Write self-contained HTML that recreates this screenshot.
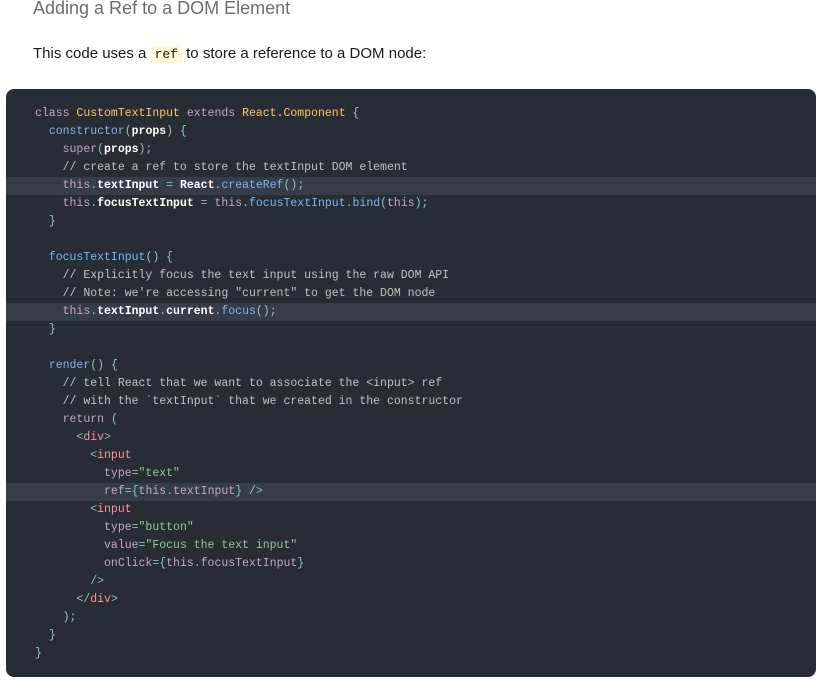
<!DOCTYPE html>
<html><head><meta charset="utf-8"><style>
body{margin:0;background:#fff;width:821px;height:695px;overflow:hidden;font-family:"Liberation Sans",sans-serif}
h2{position:absolute;left:33px;top:-2px;margin:0;font-weight:normal;font-size:18px;color:#6d6d6d}
p{position:absolute;left:33px;top:45px;margin:0;font-size:15px;color:#1a1a1a}
p code{font-family:"Liberation Mono",monospace;font-size:13px;background:#fff8d6;padding:1px 4px}
.code{position:absolute;left:6px;top:89px;width:810px;height:588px;background:#282c34;border-radius:8px;overflow:hidden}
pre{margin:0;position:absolute;top:16px;left:0;right:0;font-family:"Liberation Mono",monospace;font-size:11.5px;line-height:18px;color:#fff}
.l{display:block;padding-left:29px;height:18px;white-space:pre}
.h{background:#373c49}
.k{color:#c5a5c5}.c{color:#fac863}.f{color:#79b6f2}.p{color:#88c6be}.m{color:#c0c0c0}.s{color:#8dc891}.t{color:#fc929e}.b{font-weight:bold;color:#fff}
</style></head><body>
<h2>Adding a Ref to a DOM Element</h2>
<p>This code uses a <code>ref</code> to store a reference to a DOM node:</p>
<div class="code"><pre><span class="l"><span class="k">class</span> <span class="c">CustomTextInput</span> <span class="k">extends</span> <span class="c">React.Component</span> <span class="p">{</span></span><span class="l">  <span class="f">constructor</span><span class="p">(</span><span class="b">props</span><span class="p">)</span> <span class="p">{</span></span><span class="l">    <span class="k">super</span><span class="p">(</span><span class="b">props</span><span class="p">);</span></span><span class="l">    <span class="m">// create a ref to store the textInput DOM element</span></span><span class="l h">    <span class="k">this</span><span class="p">.</span><span class="b">textInput</span> <span class="p">=</span> <span class="b">React</span><span class="p">.</span><span class="f">createRef</span><span class="p">();</span></span><span class="l">    <span class="k">this</span><span class="p">.</span><span class="b">focusTextInput</span> <span class="p">=</span> <span class="k">this</span><span class="p">.</span><span class="f">focusTextInput</span><span class="p">.</span><span class="f">bind</span><span class="p">(</span><span class="k">this</span><span class="p">);</span></span><span class="l">  <span class="p">}</span></span><span class="l"> </span><span class="l">  <span class="f">focusTextInput</span><span class="p">()</span> <span class="p">{</span></span><span class="l">    <span class="m">// Explicitly focus the text input using the raw DOM API</span></span><span class="l">    <span class="m">// Note: we're accessing "current" to get the DOM node</span></span><span class="l h">    <span class="k">this</span><span class="p">.</span><span class="b">textInput</span><span class="p">.</span><span class="b">current</span><span class="p">.</span><span class="f">focus</span><span class="p">();</span></span><span class="l">  <span class="p">}</span></span><span class="l"> </span><span class="l">  <span class="f">render</span><span class="p">()</span> <span class="p">{</span></span><span class="l">    <span class="m">// tell React that we want to associate the &lt;input&gt; ref</span></span><span class="l">    <span class="m">// with the `textInput` that we created in the constructor</span></span><span class="l">    <span class="k">return</span> <span class="p">(</span></span><span class="l">      <span class="p">&lt;</span><span class="t">div</span><span class="p">&gt;</span></span><span class="l">        <span class="p">&lt;</span><span class="t">input</span></span><span class="l">          <span class="k">type</span><span class="p">=</span><span class="s">"text"</span></span><span class="l h">          <span class="k">ref</span><span class="p">={</span><span class="k">this</span><span class="p">.</span><span class="k">textInput</span><span class="p">}</span> <span class="p">/&gt;</span></span><span class="l">        <span class="p">&lt;</span><span class="t">input</span></span><span class="l">          <span class="k">type</span><span class="p">=</span><span class="s">"button"</span></span><span class="l">          <span class="k">value</span><span class="p">=</span><span class="s">"Focus the text input"</span></span><span class="l">          <span class="k">onClick</span><span class="p">={</span><span class="k">this</span><span class="p">.</span><span class="k">focusTextInput</span><span class="p">}</span></span><span class="l">        <span class="p">/&gt;</span></span><span class="l">      <span class="p">&lt;/</span><span class="t">div</span><span class="p">&gt;</span></span><span class="l">    <span class="p">);</span></span><span class="l">  <span class="p">}</span></span><span class="l"><span class="p">}</span></span></pre></div>
</body></html>
